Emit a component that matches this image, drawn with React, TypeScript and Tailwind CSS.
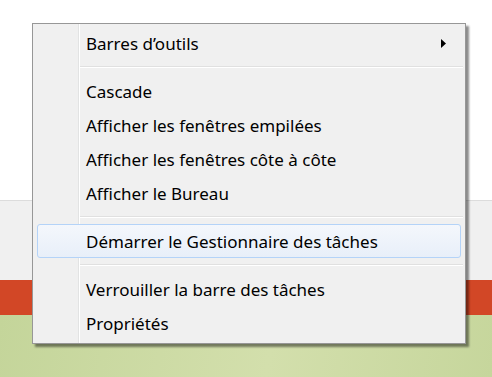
import React from "react";

type Entry = { label: string; submenu?: boolean; active?: boolean } | "sep";

const entries: Entry[] = [
  { label: "Barres d’outils", submenu: true },
  "sep",
  { label: "Cascade" },
  { label: "Afficher les fenêtres empilées" },
  { label: "Afficher les fenêtres côte à côte" },
  { label: "Afficher le Bureau" },
  "sep",
  { label: "Démarrer le Gestionnaire des tâches", active: true },
  "sep",
  { label: "Verrouiller la barre des tâches" },
  { label: "Propriétés" },
];

const App = () => {
  return (
    <div
      className="relative h-[377px] w-[492px] overflow-hidden flex flex-col"
      style={{ fontFamily: '"Noto Sans", "Open Sans", sans-serif' }}
    >
      {/* page behind the menu */}
      <div className="h-[200px] bg-white" />
      <div className="h-[80px] border-t border-[#dcdcdc] bg-[#f0f0f0]" />
      <div className="h-[35px] bg-[#d24726]" />
      <div className="flex-1 bg-[linear-gradient(100deg,#c4d59a,#d3dfac_55%,#c6d69c)]" />

      {/* context menu */}
      <div className="absolute left-[32px] top-[23px] w-[434px] h-[321px] border border-[#979797] shadow-[3px_3px_2px_rgba(0,0,0,0.45)] bg-[linear-gradient(to_right,#f0f0f0_45px,#e2e3e3_45px,#e2e3e3_46px,#ffffff_46px,#ffffff_47px,#f0f0f0_47px)] pt-[2px] flex flex-col">
        {entries.map((e, i) =>
          e === "sep" ? (
            <div key={i} className="h-[14px] flex flex-col justify-center ml-[47px] mr-[2px]">
              <div className="h-px bg-[#e0e0e0]" />
              <div className="h-px bg-white" />
            </div>
          ) : (
            <div
              key={i}
              className={
                e.active
                  ? "relative mx-[4px] h-[34px] flex items-center pl-[48px] text-[17px] text-black rounded-[3px] border border-[#b4d3f8] bg-[linear-gradient(#f4f7fc,#e8eff9)]"
                  : "relative mx-[4px] h-[34px] flex items-center pl-[48px] text-[17px] text-black border border-transparent"
              }
            >
              <span className="leading-none">{e.label}</span>
              {e.submenu ? (
                <svg
                  className="absolute right-[14px] top-[12px]"
                  width="5"
                  height="9"
                  viewBox="0 0 5 9"
                >
                  <path d="M0 0L5 4.5L0 9Z" fill="#000" />
                </svg>
              ) : null}
            </div>
          )
        )}
      </div>
    </div>
  );
};

export default App;
